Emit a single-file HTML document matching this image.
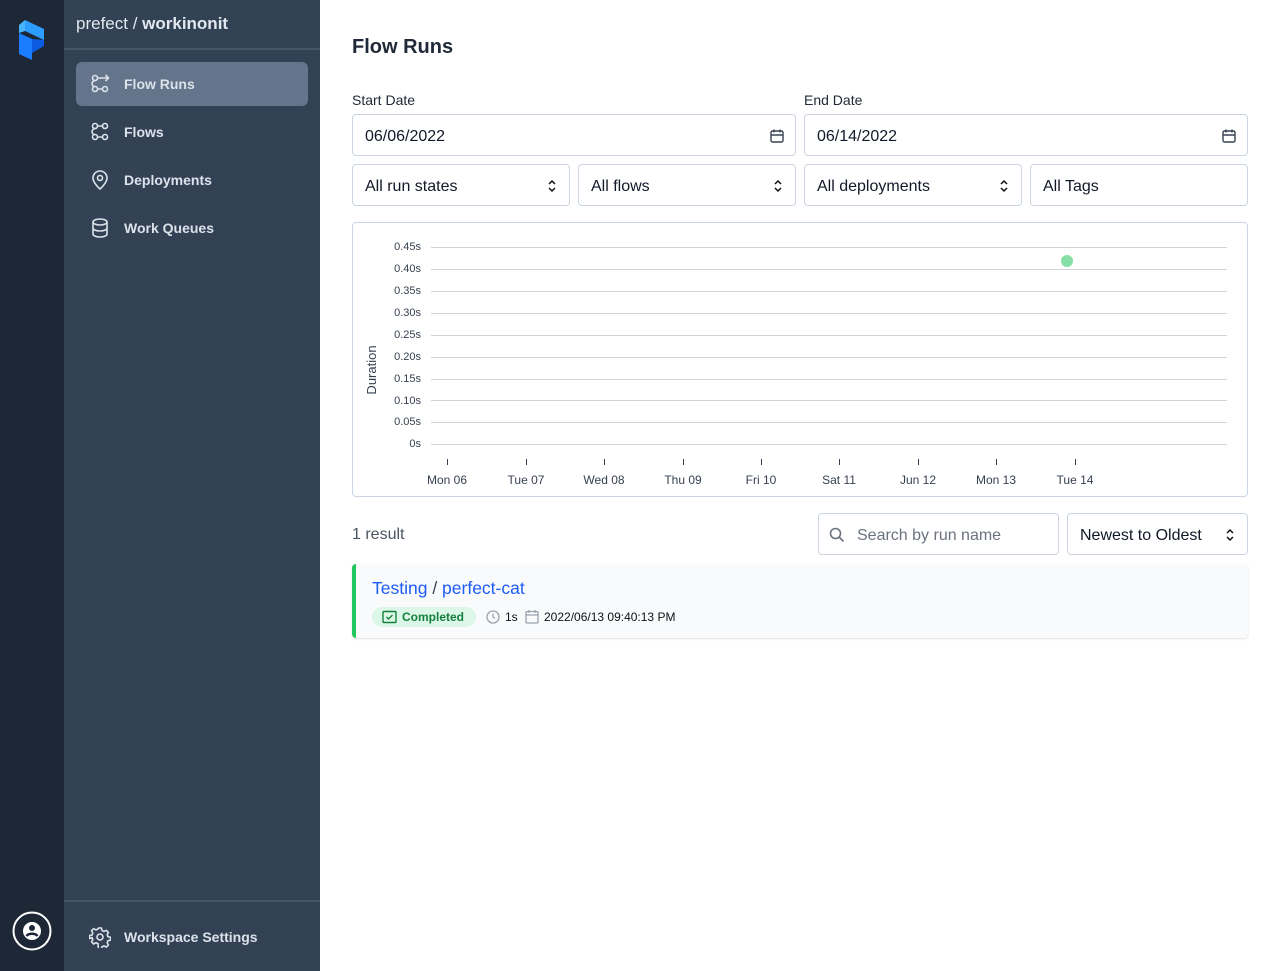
<!DOCTYPE html>
<html><head><meta charset="utf-8"><style>
*{box-sizing:border-box;margin:0;padding:0}
body{width:1280px;height:971px;font-family:"Liberation Sans",sans-serif;background:#fff;position:relative;overflow:hidden;color:#1f2937}
.rail{position:absolute;left:0;top:0;width:64px;height:971px;background:#1e2736}
.side{position:absolute;left:64px;top:0;width:256px;height:971px;background:#334155}
.ws{position:absolute;left:12px;top:14px;font-size:17px;color:#e2e8f0}
.hr{position:absolute;left:0;width:256px;height:2px;background:#475569}
.nav{position:absolute;left:12px;width:232px;height:44px;border-radius:6px;color:#dbe2ea;font-size:14px;font-weight:bold;display:flex;align-items:center;padding-left:48px}
.nav svg{position:absolute;left:13px;top:11px}
.lbl{position:absolute;font-size:14px;color:#1f2937}
.in{position:absolute;height:42px;border:1px solid #cbd5e1;border-radius:4px;font-size:16px;display:flex;align-items:center;padding-left:12px;padding-top:3px;color:#111827}
.in svg{position:absolute;right:10px;top:13px}
.yl{position:absolute;right:859px;font-size:11px;color:#374151;text-align:right}
.xl{position:absolute;top:473px;font-size:12px;color:#374151;width:60px;margin-left:-30px;text-align:center}
</style></head><body>
<div class="rail">
<svg style="position:absolute;left:19px;top:20px" width="26" height="40" viewBox="0 0 26 40"><path d="M6 0L25 9V20L6 11Z" fill="#2d9cff"/><path d="M0 13L13 19V40L0 34Z" fill="#1a7cff"/><path d="M13 19L25 20V26L13 33Z" fill="#0b5ce0"/><path d="M0 5L6 0V11L0 13Z" fill="#49b4ff"/></svg>
<svg style="position:absolute;left:12px;top:911px" width="40" height="40" viewBox="0 0 40 40"><circle cx="20" cy="20" r="18.5" fill="none" stroke="#fff" stroke-width="2"/><circle cx="20" cy="20" r="9" fill="#fff"/><circle cx="20" cy="17" r="3" fill="#1e2736"/><path d="M14.5 25c2-3 9-3 11 0" stroke="#1e2736" stroke-width="2.5" fill="none"/></svg>
</div>
<div class="side">
<div class="ws">prefect / <b>workinonit</b></div>
<div class="hr" style="top:48px"></div>
<div class="nav" style="top:62px;background:#64748b">
<svg width="22" height="22" viewBox="0 0 22 22" fill="none" stroke="#dbe2ea" stroke-width="1.6"><circle cx="6" cy="5" r="2.5"/><circle cx="6" cy="16" r="2.5"/><circle cx="16" cy="16" r="2.5"/><path d="M8.5 5h11m-3-3l3 3-3 3M8.5 16h5M6 7.5c-4 1-4 6 0 6"/></svg>Flow Runs</div>
<div class="nav" style="top:110px">
<svg width="22" height="22" viewBox="0 0 22 22" fill="none" stroke="#dbe2ea" stroke-width="1.6"><circle cx="6" cy="5" r="2.5"/><circle cx="16" cy="5" r="2.5"/><circle cx="6" cy="16" r="2.5"/><circle cx="16" cy="16" r="2.5"/><path d="M8.5 5h5M8.5 16h5M6 7.5c-4 1-4 6 0 6"/></svg>Flows</div>
<div class="nav" style="top:158px">
<svg width="22" height="22" viewBox="0 0 22 22" fill="none" stroke="#dbe2ea" stroke-width="1.6"><path d="M11 20s-7-6-7-11a7 7 0 0114 0c0 5-7 11-7 11z"/><circle cx="11" cy="9" r="2.5"/></svg>Deployments</div>
<div class="nav" style="top:206px">
<svg width="22" height="22" viewBox="0 0 22 22" fill="none" stroke="#dbe2ea" stroke-width="1.6"><ellipse cx="11" cy="5" rx="7" ry="3"/><path d="M4 5v12c0 1.7 3 3 7 3s7-1.3 7-3V5M4 11c0 1.7 3 3 7 3s7-1.3 7-3"/></svg>Work Queues</div>
<div class="hr" style="top:900px"></div>
<div class="nav" style="top:915px">
<svg width="22" height="22" viewBox="0 0 22 22" fill="none" stroke="#dbe2ea" stroke-width="1.6"><path d="M9.5 2h3l.5 2.5 2 1 2.3-1.2 2.1 2.1-1.2 2.3.8 2 2.5.5v3l-2.5.5-.8 2 1.2 2.3-2.1 2.1-2.3-1.2-2 .8-.5 2.5h-3L9 17.6l-2-.8-2.3 1.2-2.1-2.1 1.2-2.3-.8-2L.5 12.5v-3L3 9l.8-2-1.2-2.3 2.1-2.1L7 4l2-1z"/><circle cx="11" cy="11" r="3"/></svg>Workspace Settings</div>
</div>

<div style="position:absolute;left:352px;top:36px;font-size:20px;font-weight:bold;color:#1f2937">Flow Runs</div>
<div class="lbl" style="left:352px;top:92px">Start Date</div>
<div class="lbl" style="left:804px;top:92px">End Date</div>
<div class="in" style="left:352px;top:114px;width:444px">06/06/2022<svg width="16" height="16" viewBox="0 0 16 16" fill="none" stroke="#374151" stroke-width="1.4"><rect x="2" y="3" width="12" height="11" rx="1.5"/><path d="M2 7h12M5 1.5v3M11 1.5v3"/></svg></div>
<div class="in" style="left:804px;top:114px;width:444px">06/14/2022<svg width="16" height="16" viewBox="0 0 16 16" fill="none" stroke="#374151" stroke-width="1.4"><rect x="2" y="3" width="12" height="11" rx="1.5"/><path d="M2 7h12M5 1.5v3M11 1.5v3"/></svg></div>
<div class="in" style="left:352px;top:164px;width:218px">All run states<svg width="14" height="16" viewBox="0 0 14 16" fill="none" stroke="#111" stroke-width="1.5"><path d="M4 6l3-3 3 3M4 10l3 3 3-3"/></svg></div>
<div class="in" style="left:578px;top:164px;width:218px">All flows<svg width="14" height="16" viewBox="0 0 14 16" fill="none" stroke="#111" stroke-width="1.5"><path d="M4 6l3-3 3 3M4 10l3 3 3-3"/></svg></div>
<div class="in" style="left:804px;top:164px;width:218px">All deployments<svg width="14" height="16" viewBox="0 0 14 16" fill="none" stroke="#111" stroke-width="1.5"><path d="M4 6l3-3 3 3M4 10l3 3 3-3"/></svg></div>
<div class="in" style="left:1030px;top:164px;width:218px">All Tags</div>

<div style="position:absolute;left:352px;top:222px;width:896px;height:275px;border:1px solid #cbd5e1;border-radius:4px"></div>
<svg style="position:absolute;left:0;top:0" width="1280" height="500">
<g stroke="#d1d5db" stroke-width="1">
<line x1="431" x2="1227" y1="247.5" y2="247.5"/><line x1="431" x2="1227" y1="269.5" y2="269.5"/><line x1="431" x2="1227" y1="291.5" y2="291.5"/><line x1="431" x2="1227" y1="313.5" y2="313.5"/><line x1="431" x2="1227" y1="335.5" y2="335.5"/><line x1="431" x2="1227" y1="357.5" y2="357.5"/><line x1="431" x2="1227" y1="379.5" y2="379.5"/><line x1="431" x2="1227" y1="400.5" y2="400.5"/><line x1="431" x2="1227" y1="422.5" y2="422.5"/><line x1="431" x2="1227" y1="444.5" y2="444.5"/>
</g>
<g stroke="#374151"><line x1="447.5" x2="447.5" y1="459" y2="465"/><line x1="526.5" x2="526.5" y1="459" y2="465"/><line x1="604.5" x2="604.5" y1="459" y2="465"/><line x1="683.5" x2="683.5" y1="459" y2="465"/><line x1="761.5" x2="761.5" y1="459" y2="465"/><line x1="839.5" x2="839.5" y1="459" y2="465"/><line x1="918.5" x2="918.5" y1="459" y2="465"/><line x1="996.5" x2="996.5" y1="459" y2="465"/><line x1="1075.5" x2="1075.5" y1="459" y2="465"/></g>
<circle cx="1067" cy="261" r="6" fill="#86e0a6"/>
<text transform="translate(376,370) rotate(-90)" text-anchor="middle" font-size="13" fill="#374151" font-family="Liberation Sans">Duration</text>
</svg>
<div class="yl" style="top:241px">0.45s</div><div class="yl" style="top:263px">0.40s</div><div class="yl" style="top:285px">0.35s</div><div class="yl" style="top:307px">0.30s</div><div class="yl" style="top:329px">0.25s</div><div class="yl" style="top:351px">0.20s</div><div class="yl" style="top:373px">0.15s</div><div class="yl" style="top:395px">0.10s</div><div class="yl" style="top:416px">0.05s</div><div class="yl" style="top:438px">0s</div>
<div class="xl" style="left:447px">Mon 06</div><div class="xl" style="left:526px">Tue 07</div><div class="xl" style="left:604px">Wed 08</div><div class="xl" style="left:683px">Thu 09</div><div class="xl" style="left:761px">Fri 10</div><div class="xl" style="left:839px">Sat 11</div><div class="xl" style="left:918px">Jun 12</div><div class="xl" style="left:996px">Mon 13</div><div class="xl" style="left:1075px">Tue 14</div>

<div style="position:absolute;left:352px;top:526px;font-size:16px;color:#4b5563">1 result</div>
<div class="in" style="left:818px;top:513px;width:241px;padding-left:38px;color:#6b7280">
<svg style="left:10px;right:auto" width="16" height="16" viewBox="0 0 16 16" fill="none" stroke="#6b7280" stroke-width="1.6"><circle cx="6.5" cy="6.5" r="5"/><path d="M10.5 10.5l4 4"/></svg>Search by run name</div>
<div class="in" style="left:1067px;top:513px;width:181px">Newest to Oldest<svg width="14" height="16" viewBox="0 0 14 16" fill="none" stroke="#111" stroke-width="1.5"><path d="M4 6l3-3 3 3M4 10l3 3 3-3"/></svg></div>

<div style="position:absolute;left:352px;top:564px;width:896px;height:74px;background:#f8fafc;border-radius:4px;border-left:4px solid #22c55e;box-shadow:0 1px 2px rgba(0,0,0,.12)">
<div style="position:absolute;left:16px;top:14px;font-size:17.5px;color:#1d5cf5">Testing <span style="color:#374151">/</span> perfect-cat</div>
<div style="position:absolute;left:16px;top:43px;height:20px;width:104px;background:#dcf7e7;border-radius:10px;font-size:12px;font-weight:bold;color:#15803d;padding:3px 0 0 30px">Completed
<svg style="position:absolute;left:10px;top:3px" width="15" height="14" viewBox="0 0 15 14" fill="none" stroke="#15803d" stroke-width="1.4"><rect x="1" y="1.5" width="13" height="11" rx="1"/><path d="M4.5 7l2 2 4-4"/></svg></div>
<svg style="position:absolute;left:130px;top:46px" width="14" height="14" viewBox="0 0 14 14" fill="none" stroke="#9ca3af" stroke-width="1.3"><circle cx="7" cy="7" r="6"/><path d="M7 3.5V7l2 1.5"/></svg>
<div style="position:absolute;left:149px;top:46px;font-size:12px;color:#111">1s</div>
<svg style="position:absolute;left:169px;top:45px" width="14" height="15" viewBox="0 0 14 15" fill="none" stroke="#9ca3af" stroke-width="1.3"><rect x="1" y="2.5" width="12" height="11.5" rx="1"/><path d="M1 6h12M4 1v3M10 1v3"/></svg>
<div style="position:absolute;left:188px;top:46px;font-size:12px;color:#111">2022/06/13 09:40:13 PM</div>
</div>
</body></html>
